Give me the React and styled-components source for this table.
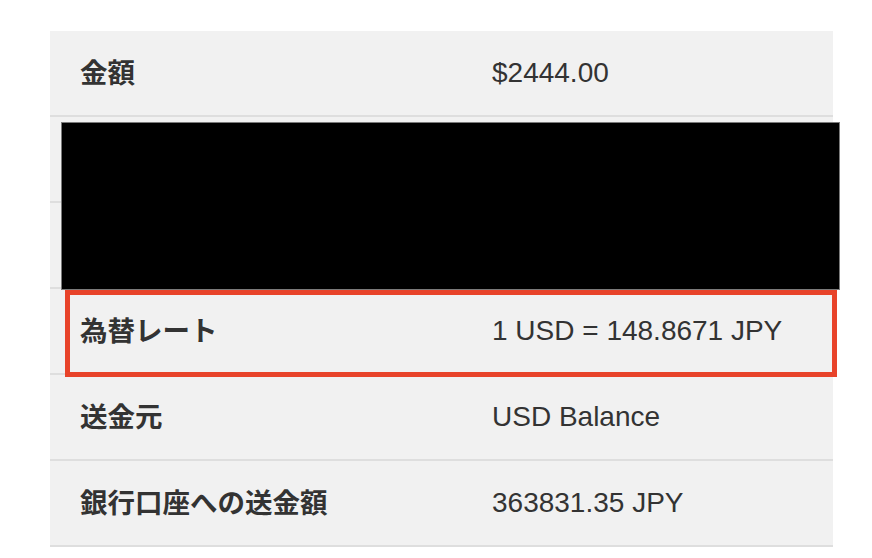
import React from "react";
import styled, { createGlobalStyle } from "styled-components";

const GlobalStyle = createGlobalStyle`
  html, body {
    margin: 0;
    padding: 0;
    background: #ffffff;
  }
  body {
    font-family: "Liberation Sans", "Noto Sans CJK JP", sans-serif;
  }
`;

const Page = styled.div`
  padding: 31px 39px 0 50px;
`;

const Table = styled.div`
  position: relative;
  width: 783px;
  display: flex;
  flex-direction: column;
`;

const Row = styled.div`
  display: grid;
  grid-template-columns: 411px 1fr;
  align-items: center;
  height: 84px;
  padding: 0 30px;
  background: #f1f1f1;
  border-bottom: 2px solid #dedede;
  color: #333333;
`;

const Label = styled.div`
  font-family: "Noto Sans CJK JP", sans-serif;
  font-weight: 700;
  font-size: 27.5px;
  line-height: 1;
  margin-top: -3px;
`;

const Value = styled.div`
  font-family: "Liberation Sans", Arial, sans-serif;
  font-size: 28px;
  padding-left: 1px;
`;

const Redaction = styled.div`
  position: absolute;
  left: 11px;
  top: 91px;
  width: 779px;
  height: 168px;
  box-sizing: border-box;
  background: #000000;
  border: 1px solid #7a7a7a;
`;

const Highlight = styled.div`
  position: absolute;
  left: 15px;
  top: 259px;
  width: 772px;
  height: 87px;
  box-sizing: border-box;
  border: 5px solid #e8432a;
`;

const rows = [
  { label: "金額", value: "$2444.00" },
  { label: "", value: "" },
  { label: "", value: "" },
  { label: "為替レート", value: "1 USD = 148.8671 JPY" },
  { label: "送金元", value: "USD Balance" },
  { label: "銀行口座への送金額", value: "363831.35 JPY" },
];

const App = () => {
  return (
    <>
      <GlobalStyle />
      <Page>
        <Table>
          {rows.map((row, i) => (
            <Row key={i}>
              <Label>{row.label}</Label>
              <Value>{row.value}</Value>
            </Row>
          ))}
          <Redaction />
          <Highlight />
        </Table>
      </Page>
    </>
  );
};

export default App;
